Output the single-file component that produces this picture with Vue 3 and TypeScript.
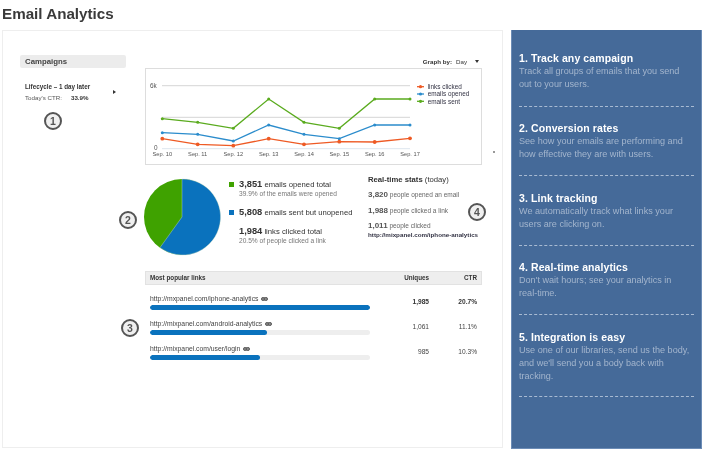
<script setup lang="ts">
const dates = ['Sep. 10','Sep. 11','Sep. 12','Sep. 13','Sep. 14','Sep. 15','Sep. 16','Sep. 17']
const xs = [16.3,51.7,87.3,122.7,158,193.3,228.7,264]
const toPts = (ys:number[]) => ys.map((y,i)=>({x:xs[i],y}))
const series = [
  { color:'#5aab1e', r:1.5, pts:toPts([49.7,53.3,59.3,30,53.3,59.3,30,30]) },
  { color:'#2b8ccc', r:1.5, pts:toPts([63.7,65.3,72,56,65.3,69.7,56,56]) },
  { color:'#ee5a24', r:1.9, pts:toPts([69.7,75.3,76.7,69.7,75.3,72.7,73,69.3]) },
]
const line = (p:{x:number,y:number}[]) => p.map(q=>`${q.x},${q.y}`).join(' ')
const legend = [
  { label:'links clicked', color:'#ee5a24', y:17.7 },
  { label:'emails opened', color:'#2b8ccc', y:25 },
  { label:'emails sent', color:'#5aab1e', y:32.3 },
]
const links = [
  { url:'http://mxpanel.com/iphone-analytics', pct:100, uniques:'1,985', ctr:'20.7%', strong:true },
  { url:'http://mixpanel.com/android-analytics', pct:53, uniques:'1,061', ctr:'11.1%', strong:false },
  { url:'http://mixpanel.com/user/login', pct:50, uniques:'985', ctr:'10.3%', strong:false },
]
const tips = [
  { t:'1. Track any campaign', d:'Track all groups of emails that you send out to your users.' },
  { t:'2. Conversion rates', d:'See how your emails are performing and how effective they are with users.' },
  { t:'3. Link tracking', d:'We automatically track what links your users are clicking on.' },
  { t:'4. Real-time analytics', d:"Don't wait hours; see your analytics in real-time." },
  { t:'5. Integration is easy', d:"Use one of our libraries, send us the body, and we'll send you a body back with tracking." },
]
const badges = [
  { n:1, cls:'b1' },{ n:2, cls:'b2' },{ n:3, cls:'b3' },{ n:4, cls:'b4' },
]
</script>

<template>
  <div class="page">
    <h1 class="title">Email Analytics</h1>
    <div class="main">
      <section class="card">
        <aside class="left">
          <div class="camp-head">Campaigns</div>
          <div class="camp-item">
            <div class="camp-text">
              <div class="camp-name">Lifecycle – 1 day later</div>
              <div class="camp-ctr"><span>Today's CTR:</span><b>33.9%</b></div>
            </div>
            <span class="arrow"></span>
          </div>
        </aside>
        <div class="right">
          <div class="graph-by"><b>Graph by:</b><span>Day</span><i class="caret"></i></div>
          <div class="chart">
            <svg width="335" height="95" viewBox="0 0 335 95">
              <line x1="16" x2="264" y1="16.7" y2="16.7" stroke="#ddd" stroke-width="1.2"/>
              <line x1="16" x2="264" y1="48.3" y2="48.3" stroke="#ddd" stroke-width="1.2"/>
              <line x1="16" x2="264" y1="79.7" y2="79.7" stroke="#dde6ee"/>
              <text x="4" y="18.7" class="ax">6k</text>
              <text x="8" y="81" class="ax">0</text>
              <text v-for="(d,i) in dates" :key="d" :x="xs[i]" y="86.5" text-anchor="middle" class="ax small">{{ d }}</text>
              <g v-for="s in series" :key="s.color">
                <polyline :points="line(s.pts)" fill="none" :stroke="s.color" stroke-width="1.3"/>
                <circle v-for="(p,i) in s.pts" :key="i" :cx="p.x" :cy="p.y" :r="s.r" :fill="s.color"/>
              </g>
              <g v-for="l in legend" :key="l.label">
                <line x1="271" x2="278" :y1="l.y" :y2="l.y" :stroke="l.color" stroke-width="1.3"/>
                <circle cx="274.5" :cy="l.y" r="1.6" :fill="l.color"/>
                <text x="281.7" :y="l.y+2.2" class="lg">{{ l.label }}</text>
              </g>
            </svg>
            <span class="dot"></span>
          </div>
          <div class="stats">
            <svg class="pie" width="78" height="78" viewBox="-39 -39 78 78">
              <circle r="38" fill="#3fa200"/>
              <path d="M0 0 L0 -38 A38 38 0 1 1 -22 30.6 Z" fill="#0a72bd" stroke="#cfe0c8" stroke-width=".4"/>
            </svg>
            <div class="totals">
              <div class="tot"><i class="sq green"></i><div><div class="big"><b>3,851</b> emails opened total</div><div class="sub">39.9% of the emails were opened</div></div></div>
              <div class="tot"><i class="sq blue"></i><div><div class="big"><b>5,808</b> emails sent but unopened</div></div></div>
              <div class="tot"><i class="sq none"></i><div><div class="big"><b>1,984</b> links clicked total</div><div class="sub">20.5% of people clicked a link</div></div></div>
            </div>
            <div class="realtime">
              <div class="rt-title"><b>Real-time stats</b> (today)</div>
              <div class="rt"><b>3,820</b> people opened an email</div>
              <div class="rt"><b>1,988</b> people clicked a link</div>
              <div class="rt last"><b>1,011</b> people clicked<div class="rt-link">http://mixpanel.com/iphone-analytics</div></div>
            </div>
          </div>
          <div class="table">
            <div class="thead"><span class="c-link">Most popular links</span><span class="c-u">Uniques</span><span class="c-c">CTR</span></div>
            <div v-for="l in links" :key="l.url" class="trow">
              <div class="c-link">
                <div class="url">{{ l.url }}
                  <svg width="7" height="4" viewBox="0 0 7 4" class="chain"><rect x=".5" y=".5" width="3.4" height="3" rx="1.4" fill="#888" stroke="#555"/><rect x="3.1" y=".5" width="3.4" height="3" rx="1.4" fill="#888" stroke="#555"/></svg>
                </div>
                <div class="bar"><div class="fill" :style="{ width: l.pct + '%' }"></div></div>
              </div>
              <span class="c-u num" :class="{ strong:l.strong }">{{ l.uniques }}</span>
              <span class="c-c num" :class="{ strong:l.strong }">{{ l.ctr }}</span>
            </div>
          </div>
        </div>
        <span v-for="b in badges" :key="b.n" class="badge" :class="b.cls">{{ b.n }}</span>
      </section>
      <aside class="side">
        <div v-for="t in tips" :key="t.t" class="tip">
          <h3>{{ t.t }}</h3>
          <p>{{ t.d }}</p>
        </div>
      </aside>
    </div>
  </div>
</template>

<style>
html, body { margin: 0; background: #fff; }
</style>

<style scoped>
.page { width: 711px; height: 452px; overflow: hidden; font-family: "Liberation Sans", Arial, sans-serif; color: #333; box-sizing: border-box; padding: 0 9px 0 2px; filter: blur(.3px); }
.title { margin: 0; height: 30px; font-size: 15.2px; line-height: 27px; font-weight: 700; color: #3a3a3a; }
.main { display: flex; gap: 8px; height: 419px; }
.card { position: relative; width: 501px; height: 418px; box-sizing: border-box; border: 1px solid #eee; padding: 24px 20px 0 17px; display: flex; gap: 19px; }
.left { width: 106px; flex: none; }
.camp-head { height: 13px; background: #ececec; border-radius: 2px; padding-left: 5px; font-size: 7.8px; line-height: 13px; font-weight: 700; color: #444; }
.camp-item { display: flex; align-items: center; margin-top: 13px; padding-left: 5px; }
.camp-text { width: 88px; }
.camp-name { font-size: 6.3px; line-height: 11px; font-weight: 700; color: #333; }
.camp-ctr { font-size: 6.2px; line-height: 11px; color: #555; display: flex; gap: 9px; }
.camp-ctr b { color: #333; }
.arrow { width: 0; height: 0; border-left: 3px solid #333; border-top: 2px solid transparent; border-bottom: 2px solid transparent; }
.right { width: 337px; flex: none; }
.graph-by { height: 13px; display: flex; align-items: center; justify-content: flex-end; gap: 4px; font-size: 6.2px; line-height: 13px; color: #333; padding-right: 3px; }
.caret { width: 0; height: 0; margin-left: 4px; border-top: 3px solid #333; border-left: 2.5px solid transparent; border-right: 2.5px solid transparent; }
.chart { position: relative; width: 337px; height: 97px; box-sizing: border-box; border: 1px solid #ddd; }
.chart svg { display: block; }
.ax { font-family: "Liberation Sans", sans-serif; font-size: 6.4px; fill: #555; }
.ax.small { font-size: 5.7px; }
.lg { font-family: "Liberation Sans", sans-serif; font-size: 6.4px; fill: #334; }
.dot { position: absolute; right: -14px; top: 82px; width: 2px; height: 2px; background: #777; border-radius: 50%; }
.stats { height: 106px; display: flex; align-items: flex-start; }
.pie { margin: 13px 8px 0 -2px; flex: none; display: block; }
.totals { width: 139px; flex: none; padding-top: 14px; }
.tot { display: flex; gap: 5px; height: 18.5px; }
.tot:first-child { height: 28px; }
.sq { width: 5px; height: 5px; margin-top: 3px; flex: none; }
.green { background: #3fa200; } .blue { background: #0a72bd; } .none { background: transparent; }
.big { font-size: 7.7px; line-height: 10px; color: #333; white-space: nowrap; }
.big b { font-size: 9.3px; color: #333; }
.sub { font-size: 6.6px; line-height: 8px; color: #777; white-space: nowrap; }
.realtime { padding-top: 10px; }
.rt-title { font-size: 7.7px; line-height: 10px; color: #333; height: 15px; }
.rt { font-size: 6.5px; line-height: 10px; color: #666; height: 15.7px; white-space: nowrap; }
.rt b { font-size: 8px; color: #555; }
.rt-link { font-size: 6.25px; line-height: 8px; font-weight: 700; color: #334; }
.table { width: 337px; }
.thead { height: 14px; margin-bottom: 4.4px; box-sizing: border-box; background: #eee; border: 1px solid #e2e2e2; display: flex; align-items: center; padding: 0 4px; font-size: 6.3px; line-height: 12px; font-weight: 700; color: #333; }
.c-link { flex: 1; min-width: 0; }
.c-u { width: 40px; text-align: right; }
.c-c { width: 48px; text-align: right; }
.trow { height: 25px; display: flex; align-items: center; padding: 0 5px; }
.url { font-size: 6.8px; line-height: 9px; color: #444; white-space: nowrap; }
.chain { margin-left: 1px; }
.bar { width: 220px; height: 5px; margin-top: 2.75px; background: #eee; border-radius: 3px; overflow: hidden; }
.fill { height: 100%; background: #0a72bd; border-radius: 3px; }
.num { font-size: 6.6px; line-height: 10px; color: #444; padding-top: 1px; }
.num.strong { font-weight: 700; color: #333; }
.badge { position: absolute; width: 18px; height: 18px; box-sizing: border-box; border: 2px solid #555; border-radius: 50%; background: #f0f0f0; font-size: 10.5px; line-height: 14px; font-weight: 700; color: #555; text-align: center; }
.b1 { left: 41px; top: 81px; }
.b2 { left: 116px; top: 180px; }
.b3 { left: 118px; top: 288px; }
.b4 { left: 465px; top: 172px; }
.side { width: 191px; height: 419px; flex: none; box-sizing: border-box; background: #456a99; border: 1px solid #6c8cb6; border-top: 0; padding: 22px 7px 0 7px; }
.tip { height: 69.5px; box-sizing: border-box; border-bottom: 1px dashed #a9bbd3; }
.tip:first-child { height: 54.5px; }
.tip + .tip { padding-top: 15.5px; }
.tip:last-child { height: 82px; }
.tip h3 { margin: 0; font-size: 10.5px; line-height: 13px; font-weight: 700; color: #fff; letter-spacing: .1px; }
.tip p { margin: 0; max-width: 171.5px; font-size: 9.1px; line-height: 13px; color: #a3b5cd; }
</style>
